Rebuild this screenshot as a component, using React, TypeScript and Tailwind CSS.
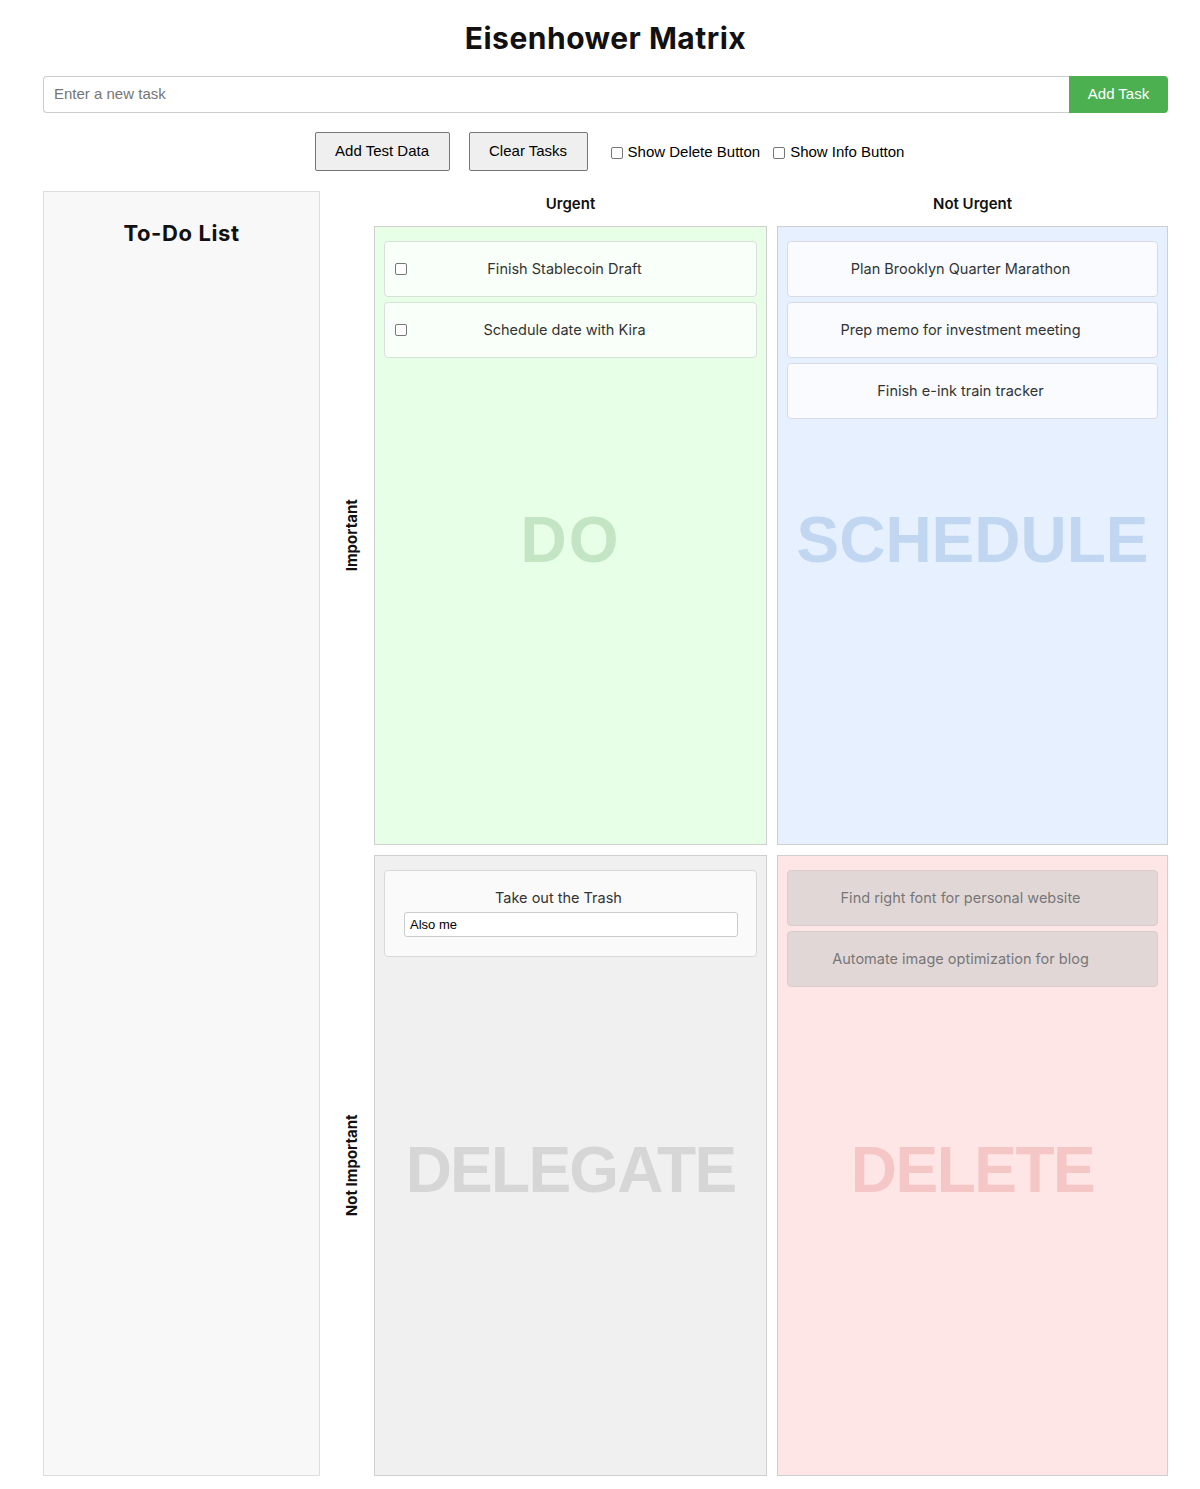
import React from "react";

const inter = "font-['Inter','Noto_Sans',sans-serif]";
const arial = "font-['Liberation_Sans',Arial,sans-serif]";

function Box() {
  return <span className="block w-[12px] h-[12px] shrink-0 border border-[#767676] rounded-[2px] bg-white" />;
}

function Card({
  text,
  check,
  tone,
}: {
  text: string;
  check?: boolean;
  tone: "do" | "sched" | "del";
}) {
  const bg =
    tone === "do"
      ? "bg-[#f9fff9] border-[#d9dfd9]"
      : tone === "sched"
      ? "bg-[#f9fbff] border-[#d8dce2]"
      : "bg-[#e2d7d7] border-[#d8cccc]";
  const color = tone === "del" ? "text-[#777]" : "text-[#333]";
  return (
    <div className={`flex items-center h-[56px] px-[10px] border rounded-[4px] ${bg}`}>
      {check && <Box />}
      <div className={`flex-1 text-center pr-[24px] text-[14.5px] ${color} ${inter}`}>{text}</div>
    </div>
  );
}

function Quadrant({
  bg,
  mark,
  markClass,
  h,
  children,
}: {
  bg: string;
  mark: string;
  markClass: string;
  h: string;
  children?: React.ReactNode;
}) {
  return (
    <div className={`relative ${h} border border-[#cfcfcf] ${bg} px-[9px] pt-[14px] flex flex-col gap-[5px]`}>
      <div className="absolute inset-0 flex items-center justify-center pt-[8px] pointer-events-none">
        <span className={`text-[64px] font-bold ${markClass} ${arial}`}>{mark}</span>
      </div>
      <div className="relative flex flex-col gap-[5px]">{children}</div>
    </div>
  );
}

export default function App() {
  return (
    <div className="w-[1200px] min-h-[1489px] bg-white pl-[43px] pr-[32px] pt-[20px]">
      <h1 className={`text-center text-[30px] leading-[36px] font-bold tracking-[0.5px] text-[#111] ${inter}`}>
        Eisenhower Matrix
      </h1>

      <div className="mt-[20px] flex h-[37px]">
        <div className={`flex-1 flex items-center border border-[#ccc] border-r-0 rounded-l-[4px] pl-[10px] text-[15px] text-[#757575] ${arial}`}>
          Enter a new task
        </div>
        <div className={`w-[99px] flex items-center justify-center bg-[#4caf50] text-white text-[15px] rounded-r-[4px] ${arial}`}>
          Add Task
        </div>
      </div>

      <div className={`mt-[19px] flex items-center justify-center h-[39px] text-[15px] text-black ${arial}`}>
        <div className="ml-[8px] h-[39px] w-[135px] flex items-center justify-center bg-[#efefef] border border-[#767676] rounded-[2px]">
          Add Test Data
        </div>
        <div className="ml-[19px] h-[39px] w-[119px] flex items-center justify-center bg-[#efefef] border border-[#767676] rounded-[2px]">
          Clear Tasks
        </div>
        <div className="ml-[23px] flex items-center gap-[5px] pt-[2px]">
          <Box />
          <span>Show Delete Button</span>
        </div>
        <div className="ml-[13px] flex items-center gap-[5px] pt-[2px]">
          <Box />
          <span>Show Info Button</span>
        </div>
      </div>

      <div className="mt-[20px] flex">
        <div className="w-[277px] h-[1285px] bg-[#f8f8f8] border border-[#ddd] pt-[27px]">
          <h2 className={`text-center text-[22px] leading-[28px] font-bold tracking-[0.6px] text-[#111] ${inter}`}>To-Do List</h2>
        </div>

        <div className="flex-1 flex">
          <div className="w-[54px] flex flex-col">
            <div className="h-[35px]" />
            <div className="h-[619px] flex items-center justify-center pl-[10px]">
              <span className={`-rotate-90 whitespace-nowrap text-[15px] font-bold text-[#111] ${inter}`}>Important</span>
            </div>
            <div className="h-[10px]" />
            <div className="h-[621px] flex items-center justify-center pl-[10px]">
              <span className={`-rotate-90 whitespace-nowrap text-[15px] font-bold text-[#111] ${inter}`}>Not Important</span>
            </div>
          </div>

          <div className="flex-1 flex flex-col">
            <div className={`h-[35px] grid grid-cols-[393px_1fr] gap-[10px] text-[15px] font-semibold text-[#111] ${inter}`}>
              <div className="flex items-center justify-center pb-[8px]">Urgent</div>
              <div className="flex items-center justify-center pb-[8px]">Not Urgent</div>
            </div>
            <div className="grid grid-cols-[393px_1fr] gap-[10px]">
              <Quadrant bg="bg-[#e6ffe6]" mark="DO" markClass="text-[#c3e5c3] tracking-[2px]" h="h-[619px]">
                <Card tone="do" check text="Finish Stablecoin Draft" />
                <Card tone="do" check text="Schedule date with Kira" />
              </Quadrant>
              <Quadrant bg="bg-[#e6f0ff]" mark="SCHEDULE" markClass="text-[#c1d7f1]" h="h-[619px]">
                <Card tone="sched" text="Plan Brooklyn Quarter Marathon" />
                <Card tone="sched" text="Prep memo for investment meeting" />
                <Card tone="sched" text="Finish e-ink train tracker" />
              </Quadrant>
              <Quadrant bg="bg-[#f0f0f0]" mark="DELEGATE" markClass="text-[#d6d6d6] tracking-[-1.75px]" h="h-[621px]">
                <div className="h-[87px] border border-[#d9d9d9] rounded-[4px] bg-[#fafafa] px-[10px] pt-[16px]">
                  <div className={`text-center pr-[24px] text-[14.5px] leading-[22px] text-[#333] ${inter}`}>
                    Take out the Trash
                  </div>
                  <div className={`mt-[3px] ml-[9px] mr-[8px] h-[25px] flex items-center border border-[#ccc] rounded-[3px] bg-white pl-[5px] text-[13px] text-black ${arial}`}>
                    Also me
                  </div>
                </div>
              </Quadrant>
              <Quadrant bg="bg-[#ffe6e6]" mark="DELETE" markClass="text-[#f5c6c6] tracking-[-1.5px]" h="h-[621px]">
                <Card tone="del" text="Find right font for personal website" />
                <Card tone="del" text="Automate image optimization for blog" />
              </Quadrant>
            </div>
          </div>
        </div>
      </div>
    </div>
  );
}
